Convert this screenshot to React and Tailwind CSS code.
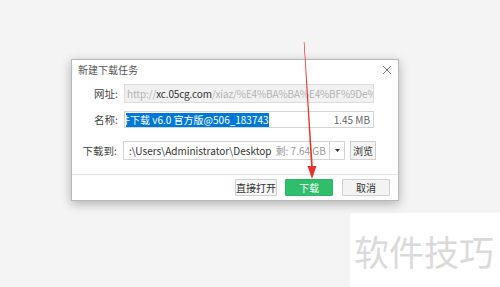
import React from "react";

const font = { fontFamily: '"Noto Sans CJK SC", "Noto Sans", sans-serif' };

function CloseIcon() {
  return (
    <svg width="10" height="10" viewBox="0 0 10 10" className="text-[#777]">
      <path d="M1 1 L9 9 M9 1 L1 9" stroke="currentColor" strokeWidth="1" fill="none" />
    </svg>
  );
}

function Label({ children }) {
  return (
    <div className="w-[52px] shrink-0 text-right pr-[6px] text-[10.5px] text-[#444]">{children}</div>
  );
}

function Btn({ children, className = "" }) {
  return (
    <div
      className={`h-[17px] flex items-center justify-center whitespace-nowrap text-[10px] border rounded-[1px] ${className}`}
    >
      {children}
    </div>
  );
}

export default function App() {
  return (
    <div
      className="relative w-[500px] h-[287px] overflow-hidden bg-[#f4f4f4]"
      style={font}
    >
      {/* watermark box */}
      <div className="absolute left-[350px] top-[213px] w-[150px] h-[74px] bg-white flex items-center pl-[4px]">
        <span className="text-[35px] leading-none text-[#dadada]">软件技巧</span>
      </div>

      <div className="relative pl-[71px] pt-[59px]">
        <div className="w-[328px] h-[142px] bg-white border border-[#b9b9b9] shadow-[0_3px_10px_rgba(0,0,0,0.28)] flex flex-col">
          {/* title */}
          <div className="h-[17px] mt-[1px] flex items-center justify-between pl-[6px] pr-[6px]">
            <span className="text-[10px] text-[#555]">新建下载任务</span>
            <CloseIcon />
          </div>

          <div className="flex flex-col pt-[6px]">
            {/* url row */}
            <div className="flex items-center h-[19px]">
              <Label>网址:</Label>
              <div className="w-[250px] h-[19px] border border-[#dcdcdc] bg-[#f1f1f1] flex items-center pl-[2px] overflow-hidden whitespace-nowrap text-[10px] tracking-[-0.15px] text-[#b4b4b4]">
                http://<span className="text-[#333]">xc.05cg.com</span>/xiaz/%E4%BA%BA%E4%BF%9De%
              </div>
            </div>

            {/* name row */}
            <div className="flex items-center h-[17px] mt-[8px]">
              <Label>名称:</Label>
              <div className="w-[250px] h-[17px] border border-[#d4d4d4] bg-white flex items-center justify-between whitespace-nowrap text-[10px]">
                <div className="ml-[1px] overflow-hidden flex">
                  <span className="-ml-[16px] bg-[#0078d7] text-white leading-[14px]">
                    软件下载 v6.0 官方版@506_183743
                  </span>
                </div>
                <span className="pr-[3px] text-[#666]">1.45 MB</span>
              </div>
            </div>

            {/* path row */}
            <div className="flex items-center h-[19px] mt-[13px]">
              <div className="w-[51px] shrink-0 text-right pr-[6px] text-[10.5px] text-[#444]">下载到:</div>
              <div className="w-[207px] h-[19px] border border-[#d4d4d4] bg-white flex items-center pl-[5px] overflow-hidden whitespace-nowrap text-[10px] text-[#333]">
                :\Users\Administrator\Desktop<span className="ml-[4px] text-[#999]">剩: 7.64 GB</span>
              </div>
              <div className="w-[15px] h-[19px] border border-l-0 border-[#d4d4d4] bg-white flex items-center justify-center">
                <svg width="5" height="3" viewBox="0 0 5 3">
                  <path d="M0 0 L5 0 L2.5 3 Z" fill="#333" />
                </svg>
              </div>
              <div className="ml-[5px] w-[26px] h-[19px] border border-[#cfcfcf] bg-[#f5f5f5] flex items-center justify-center text-[10px] text-[#333]">
                浏览
              </div>
            </div>
          </div>

          {/* footer */}
          <div className="mt-[14px] border-t border-[#e6e6e6] flex justify-end items-start pt-[4px] pr-[8px] gap-[8px]">
            <Btn className="w-[42px] border-[#cfcfcf] bg-[#f7f7f7] text-[#333]">直接打开</Btn>
            <Btn className="w-[48px] border-[#2bb866] bg-[#2fbf6c] text-white">下载</Btn>
            <Btn className="ml-[1px] w-[48px] border-[#d0d0d0] bg-[#f3f3f3] text-[#333]">取消</Btn>
          </div>
        </div>
      </div>

      {/* red arrow */}
      <svg className="absolute left-0 top-0 pointer-events-none" width="500" height="287" viewBox="0 0 500 287">
        <polygon points="303.8,42 304.4,42 312.9,168 311.1,168" fill="#e8322e" />
        <polygon points="307.5,166 316.5,166 312,179" fill="#e8322e" />
      </svg>
    </div>
  );
}
